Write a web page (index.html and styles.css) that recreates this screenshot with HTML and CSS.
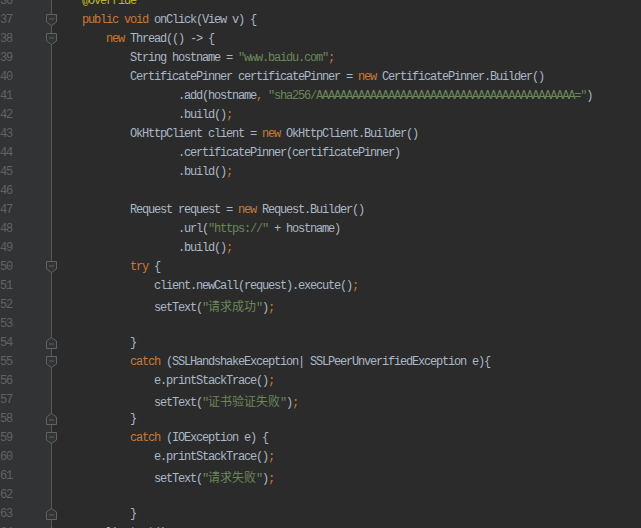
FILE: index.html
```html
<!DOCTYPE html>
<html>
<head>
<meta charset="utf-8">
<link rel="stylesheet" href="styles.css">
</head>
<body>
<div class="editor">
<div class="row"><span class="gutter"><span class="ln">36</span></span><span class="code"><span class="a">@Override</span></span></div>
<div class="row"><span class="gutter"><span class="ln">37</span><svg class="fold" width="11" height="12" viewBox="0 0 11 12"><path d="M0.5 0.5H10.5V8L5.5 11.5L0.5 8Z"/><path d="M3 5H8"/></svg></span><span class="code"><span class="k">public void</span> onClick(View v) {</span></div>
<div class="row"><span class="gutter"><span class="ln">38</span><svg class="fold" width="11" height="12" viewBox="0 0 11 12"><path d="M0.5 0.5H10.5V8L5.5 11.5L0.5 8Z"/><path d="M3 5H8"/></svg></span><span class="code">    <span class="k">new</span> Thread(() -&gt; {</span></div>
<div class="row"><span class="gutter"><span class="ln">39</span></span><span class="code">        String hostname = <span class="s">"www.baidu.com"</span><span class="k">;</span></span></div>
<div class="row"><span class="gutter"><span class="ln">40</span></span><span class="code">        CertificatePinner certificatePinner = <span class="k">new</span> CertificatePinner.Builder()</span></div>
<div class="row"><span class="gutter"><span class="ln">41</span></span><span class="code">                .add(hostname<span class="k">,</span> <span class="s">"sha256/AAAAAAAAAAAAAAAAAAAAAAAAAAAAAAAAAAAAAAAAAAA="</span>)</span></div>
<div class="row"><span class="gutter"><span class="ln">42</span></span><span class="code">                .build()<span class="k">;</span></span></div>
<div class="row"><span class="gutter"><span class="ln">43</span></span><span class="code">        OkHttpClient client = <span class="k">new</span> OkHttpClient.Builder()</span></div>
<div class="row"><span class="gutter"><span class="ln">44</span></span><span class="code">                .certificatePinner(certificatePinner)</span></div>
<div class="row"><span class="gutter"><span class="ln">45</span></span><span class="code">                .build()<span class="k">;</span></span></div>
<div class="row"><span class="gutter"><span class="ln">46</span></span><span class="code"></span></div>
<div class="row"><span class="gutter"><span class="ln">47</span></span><span class="code">        Request request = <span class="k">new</span> Request.Builder()</span></div>
<div class="row"><span class="gutter"><span class="ln">48</span></span><span class="code">                .url(<span class="s">"https://"</span> + hostname)</span></div>
<div class="row"><span class="gutter"><span class="ln">49</span></span><span class="code">                .build()<span class="k">;</span></span></div>
<div class="row"><span class="gutter"><span class="ln">50</span><svg class="fold" width="11" height="12" viewBox="0 0 11 12"><path d="M0.5 0.5H10.5V8L5.5 11.5L0.5 8Z"/><path d="M3 5H8"/></svg></span><span class="code">        <span class="k">try</span> {</span></div>
<div class="row"><span class="gutter"><span class="ln">51</span></span><span class="code">            client.newCall(request).execute()<span class="k">;</span></span></div>
<div class="row"><span class="gutter"><span class="ln">52</span></span><span class="code">            setText(<span class="s">"<span class="c">请求成功</span>"</span>)<span class="k">;</span></span></div>
<div class="row"><span class="gutter"><span class="ln">53</span></span><span class="code"></span></div>
<div class="row"><span class="gutter"><span class="ln">54</span><svg class="fold" width="11" height="12" viewBox="0 0 11 12"><path d="M0.5 11.5H10.5V4L5.5 0.5L0.5 4Z"/><path d="M3 7H8"/></svg></span><span class="code">        }</span></div>
<div class="row"><span class="gutter"><span class="ln">55</span><svg class="fold" width="11" height="12" viewBox="0 0 11 12"><path d="M0.5 0.5H10.5V8L5.5 11.5L0.5 8Z"/><path d="M3 5H8"/></svg></span><span class="code">        <span class="k">catch</span> (SSLHandshakeException| SSLPeerUnverifiedException e){</span></div>
<div class="row"><span class="gutter"><span class="ln">56</span></span><span class="code">            e.printStackTrace()<span class="k">;</span></span></div>
<div class="row"><span class="gutter"><span class="ln">57</span></span><span class="code">            setText(<span class="s">"<span class="c">证书验证失败</span>"</span>)<span class="k">;</span></span></div>
<div class="row"><span class="gutter"><span class="ln">58</span><svg class="fold" width="11" height="12" viewBox="0 0 11 12"><path d="M0.5 11.5H10.5V4L5.5 0.5L0.5 4Z"/><path d="M3 7H8"/></svg></span><span class="code">        }</span></div>
<div class="row"><span class="gutter"><span class="ln">59</span><svg class="fold" width="11" height="12" viewBox="0 0 11 12"><path d="M0.5 0.5H10.5V8L5.5 11.5L0.5 8Z"/><path d="M3 5H8"/></svg></span><span class="code">        <span class="k">catch</span> (IOException e) {</span></div>
<div class="row"><span class="gutter"><span class="ln">60</span></span><span class="code">            e.printStackTrace()<span class="k">;</span></span></div>
<div class="row"><span class="gutter"><span class="ln">61</span></span><span class="code">            setText(<span class="s">"<span class="c">请求失败</span>"</span>)<span class="k">;</span></span></div>
<div class="row"><span class="gutter"><span class="ln">62</span></span><span class="code"></span></div>
<div class="row"><span class="gutter"><span class="ln">63</span><svg class="fold" width="11" height="12" viewBox="0 0 11 12"><path d="M0.5 11.5H10.5V4L5.5 0.5L0.5 4Z"/><path d="M3 7H8"/></svg></span><span class="code">        }</span></div>
<div class="row"><span class="gutter"><span class="ln">64</span><svg class="fold" width="11" height="12" viewBox="0 0 11 12"><path d="M0.5 11.5H10.5V4L5.5 0.5L0.5 4Z"/><path d="M3 7H8"/></svg></span><span class="code">    }).start()<span class="k">;</span></span></div>
</div>
</body>
</html>
```
FILE: styles.css
```css
html, body {
  margin: 0;
  padding: 0;
  background: #2b2b2b;
  overflow: hidden;
  height: 100%;
}

.editor {
  margin-top: -8px;
  font-family: "Liberation Mono", monospace;
  font-size: 12px;
  letter-spacing: -1.2px;
  color: #a9b7c6;
}

.row {
  display: flex;
  height: 19px;
  line-height: 19px;
}

.gutter {
  position: relative;
  display: flex;
  flex: none;
  width: 52px;
  box-sizing: border-box;
  background: #313335;
  border-right: 1px solid #555759;
}

.ln {
  width: 12px;
  text-align: right;
  color: #606366;
}

.fold {
  position: absolute;
  left: 46px;
  top: 3px;
  fill: #313335;
  stroke: #5f6366;
  stroke-width: 1;
}

.code {
  flex: 1;
  padding-left: 30px;
  white-space: pre;
}

.k { color: #cc7832; }
.s { color: #6a8759; }
.a { color: #bbb529; }

.c {
  font-family: "Noto Sans CJK SC", sans-serif;
  font-size: 12px;
  letter-spacing: 0;
}
```
